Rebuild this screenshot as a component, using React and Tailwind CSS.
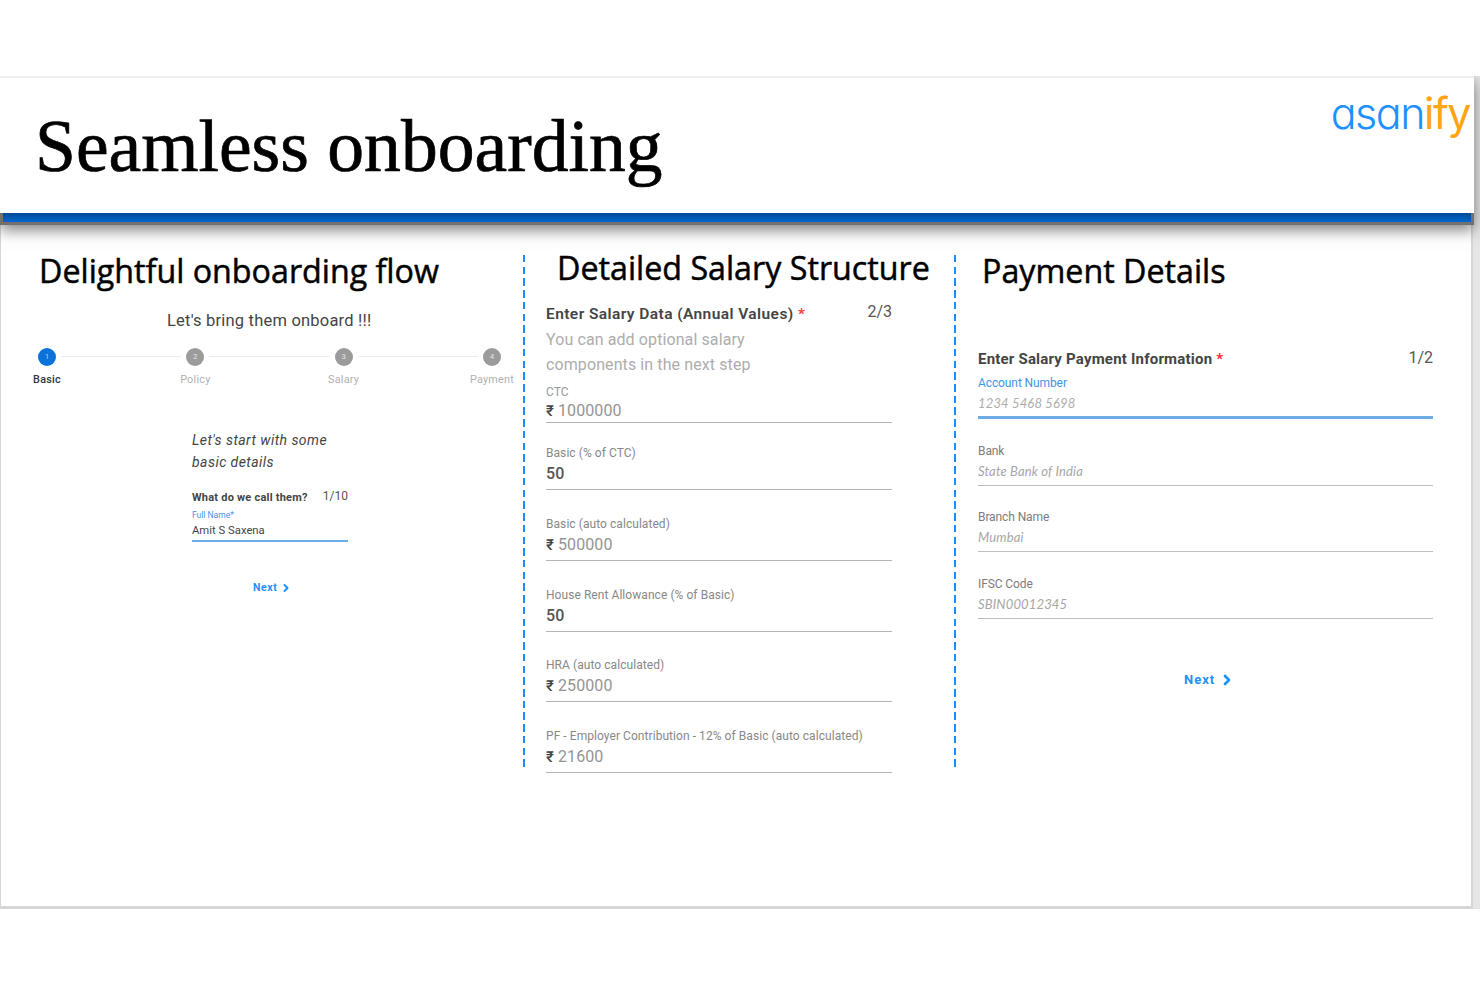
import { ChevronRight } from "lucide-react";

const steps = ["Basic", "Policy", "Salary", "Payment"];

const salaryFields = [
  { label: "Basic (% of CTC)", value: "50", editable: true },
  { label: "Basic (auto calculated)", value: "500000" },
  { label: "House Rent Allowance (% of Basic)", value: "50", editable: true },
  { label: "HRA (auto calculated)", value: "250000" },
  { label: "PF - Employer Contribution - 12% of Basic (auto calculated)", value: "21600" },
];

const bankFields = [
  { label: "Bank", placeholder: "State Bank of India" },
  { label: "Branch Name", placeholder: "Mumbai" },
  { label: "IFSC Code", placeholder: "SBIN00012345" },
];

function Heading({ children, className }) {
  return (
    <h2 className={`h-10 origin-left scale-x-[0.977] whitespace-nowrap font-['Open_Sans',sans-serif] text-[33px] leading-10 text-black [-webkit-text-stroke:0.5px_#000] ${className}`}>
      {children}
    </h2>
  );
}

function Divider() {
  return (
    <div className="mt-[30px] h-[512px] w-[2px] shrink-0 bg-[repeating-linear-gradient(to_bottom,#1a8cff_0px,#1a8cff_7.5px,transparent_7.5px,transparent_11.73px)]" />
  );
}

function Stepper() {
  return (
    <div className="mt-[17px] ml-[38px] flex h-[38px] w-[463px] items-start">
      {steps.map((step, i) => (
        <div key={step} className={i > 0 ? "flex flex-1 items-start" : "flex items-start"}>
          {i > 0 && <div className="mx-[5px] mt-[8px] h-px flex-1 bg-[#ececec]" />}
          <div className="flex w-[18px] flex-col items-center">
            <div className={`flex h-[18px] w-[18px] items-center justify-center rounded-full text-[8px] ${i === 0 ? "bg-[#0b72d9] text-[#a8d0f5]" : "bg-[#9b9b9b] text-[#e2e2e2]"}`}>
              {i + 1}
            </div>
            <span className={`mt-[8px] text-[10.8px] leading-3 tracking-[0.25px] whitespace-nowrap ${i === 0 ? "font-medium text-[#333]" : "text-[#b0b0b0]"}`}>
              {step}
            </span>
          </div>
        </div>
      ))}
    </div>
  );
}

function SalaryField({ label, value, editable }) {
  return (
    <div className="flex h-[70.75px] flex-col justify-end border-b border-[#b4b4b4] pb-[6px] first:h-[67px]">
      <span className="text-[12px] leading-[14px] tracking-[0.06px] text-[#888]">{label}</span>
      <SalaryValue className="mt-[5px]" value={value} editable={editable} />
    </div>
  );
}

function SalaryValue({ value, editable, className }) {
  return (
    <div className={`flex h-[18px] text-[16px] leading-[18px] tracking-[0.1px] ${className}`}>
      {editable ? (
        <span className="font-medium text-[#555]">{value}</span>
      ) : (
        <>
          <span className="w-[12px] text-[15px] font-medium text-[#444]">₹</span>
          <span className="text-[#949494]">{value}</span>
        </>
      )}
    </div>
  );
}

export default function App() {
  return (
    <div className="h-[987px] w-[1480px] overflow-hidden bg-white pt-[76px] font-[Roboto,sans-serif]">
      <div className="h-[833px] overflow-hidden bg-[#e6e6e6]">
        <header className="relative h-[149px] w-[1474px] shadow-[0_5px_14px_rgba(0,0,0,0.5)]">
          <div className="flex h-[137px] items-start justify-between border-t-2 border-[#eee] bg-white pl-[35px]">
            <h1 className="mt-[26px] whitespace-nowrap font-['Liberation_Serif',serif] text-[73.6px] leading-[84px] text-black [-webkit-text-stroke:0.7px_#000]">
              Seamless onboarding
            </h1>
            <div className="mt-[10px] mr-[4px] font-[Inter,sans-serif] text-[43px] leading-[50px] font-[350] tracking-[-1.5px] text-[#1e90ff] [font-feature-settings:'cv11']">
              asan<span className="font-normal text-[#ffa514]">ify</span>
            </div>
          </div>
          <div className="h-[12px] bg-[#707070] px-[3px]">
            <div className="h-[9px] bg-linear-to-b from-[#004a94] to-[#0066d0]" />
          </div>
        </header>

        <main className="flex h-[684px] w-[1473px] border-r-2 border-b-3 border-l border-[#d6d6d6] bg-white pl-px">
          <section className="w-[521px] shrink-0">
            <Heading className="mt-[26px] ml-[37px]">Delightful onboarding flow</Heading>
            <p className="mt-[20px] ml-[165px] text-[16.5px] leading-5 tracking-[0.2px] whitespace-nowrap text-[#444]">Let's bring them onboard !!!</p>
            <div className="-ml-[2px]">
              <Stepper />
            </div>
            <div className="mt-[43px] ml-[190px] w-[156px]">
              <p className="text-[14px] leading-[22px] tracking-[0.45px] whitespace-nowrap text-[#444] italic">
                Let's start with some
                <br />
                basic details
              </p>
              <div className="mt-[18px] flex justify-between leading-[14px] whitespace-nowrap">
                <span className="text-[11px] font-bold tracking-[0.22px] text-[#444]">What do we call them?</span>
                <span className="-mt-[2px] text-[12px] text-[#555]">1/10</span>
              </div>
              <div className="mt-[5px] text-[8.5px] leading-[10px] text-[#3f95e8]">Full Name*</div>
              <div className="mt-[4px] border-b-2 border-[#6eace8] pb-[2px] text-[11.3px] leading-[14px] text-[#444]">
                Amit S Saxena
              </div>
              <button className="mt-[39px] ml-[61px] flex items-center text-[10.5px] leading-[14px] font-bold tracking-[0.6px] text-[#1e90ff]">
                Next
                <ChevronRight className="ml-[3px] h-[12px] w-[12px]" strokeWidth={4} />
              </button>
            </div>
          </section>

          <Divider />

          <section className="ml-[21px] w-[408px] shrink-0">
            <Heading className="mt-[23px] ml-[11px]">Detailed Salary Structure</Heading>
            <div className="w-[346px]">
              <div className="mt-[17px] flex justify-between leading-[18px] whitespace-nowrap">
                <span className="text-[15.5px] font-semibold tracking-[0.42px] text-[#444]">
                  Enter Salary Data (Annual Values) <span className="text-[#ff3b44]">*</span>
                </span>
                <span className="-mt-[2px] text-[16px] text-[#555]">2/3</span>
              </div>
              <p className="mt-[5px] text-[16px] leading-[24.5px] tracking-[0.1px] text-[#adadad]">
                You can add optional salary
                <br />
                components in the next step
              </p>
              <div className="mt-[8px] border-b border-[#b4b4b4] pb-[2px]">
                <div className="text-[12px] leading-[14px] text-[#999]">CTC</div>
                <SalaryValue className="mt-[3px]" value="1000000" />
              </div>
              <div>
                {salaryFields.map((field) => (
                  <SalaryField key={field.label} {...field} />
                ))}
              </div>
            </div>
          </section>

          <Divider />

          <section className="ml-[22px] w-[455px] shrink-0">
            <Heading className="mt-[26px] ml-[4px]">Payment Details</Heading>
            <div className="mt-[59px] flex justify-between leading-[18px] whitespace-nowrap">
              <span className="text-[15px] font-bold tracking-[0.2px] text-[#444]">
                Enter Salary Payment Information <span className="text-[#ff2a38]">*</span>
              </span>
              <span className="-mt-px text-[16px] text-[#555]">1/2</span>
            </div>
            <div className="mt-[8px] border-b-3 border-[#6eace8] pb-[5px]">
              <div className="text-[12px] leading-[14px] tracking-[-0.1px] text-[#3f95e8]">Account Number</div>
              <div className="mt-[5px] font-[Lato,sans-serif] text-[13px] leading-4 tracking-[0.15px] text-[#adadad] italic">1234 5468 5698</div>
            </div>
            {bankFields.map((field) => (
              <div key={field.label} className="flex h-[66.7px] flex-col justify-end border-b border-[#bdbdbd] pb-[6px] first-of-type:pb-[7px]">
                <span className="text-[12px] leading-[14px] tracking-[-0.1px] text-[#7c7c7c]">{field.label}</span>
                <span className="mt-[5px] font-[Lato,sans-serif] text-[13px] leading-4 tracking-[0.15px] text-[#a6a6a6] italic">{field.placeholder}</span>
              </div>
            ))}
            <button className="mt-[53px] ml-[206px] flex items-center text-[13px] leading-4 font-bold tracking-[1px] text-[#1e90ff]">
              Next
              <ChevronRight className="ml-[4px] h-[16px] w-[16px]" strokeWidth={4} />
            </button>
          </section>
        </main>
      </div>
    </div>
  );
}
